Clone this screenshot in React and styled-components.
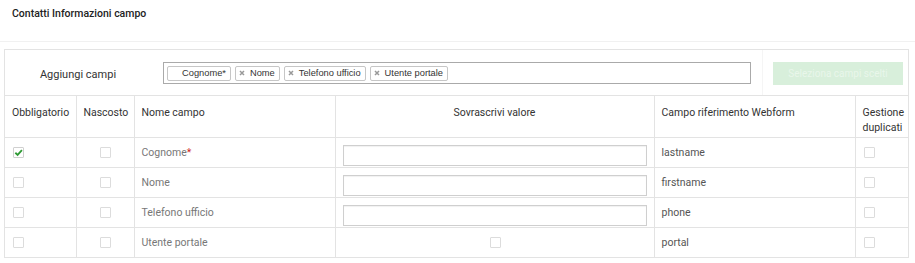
import React from "react";
import styled, { createGlobalStyle } from "styled-components";

const GlobalStyle = createGlobalStyle`
  html, body {
    margin: 0;
    padding: 0;
    background: #fff;
  }
  body {
    font-family: Roboto, "Noto Sans", Arial, sans-serif;
    color: #333;
  }
`;

const tags = [
  { label: "Cognome*", locked: true },
  { label: "Nome" },
  { label: "Telefono ufficio" },
  { label: "Utente portale" },
];

const fields = [
  { label: "Cognome", required: true, mandatory: true, override: "input", webform: "lastname" },
  { label: "Nome", override: "input", webform: "firstname" },
  { label: "Telefono ufficio", override: "input", webform: "phone" },
  { label: "Utente portale", override: "checkbox", webform: "portal" },
];

const Checkbox = ({ checked }) => (
  <CheckBox $checked={checked}>
    {checked && (
      <svg width="10" height="9" viewBox="0 0 10 9">
        <path d="M1.5 4.8 L4 7.2 L8.8 1.8" fill="none" stroke="#2f9a35" strokeWidth="2" />
      </svg>
    )}
  </CheckBox>
);

const App = () => {
  return (
    <Page>
      <GlobalStyle />
      <TitleBar>
        <Title>Contatti Informazioni campo</Title>
      </TitleBar>
      <Panel>
        <AddRow>
          <AddLabel>Aggiungi campi</AddLabel>
          <AddField>
            <TagBox>
              {tags.map((t) => (
                <Tag key={t.label}>
                  <TagRemove $hidden={t.locked}>
                    <svg width="6" height="6" viewBox="0 0 6 6">
                      <path d="M1 1 L5 5 M5 1 L1 5" stroke="#999" strokeWidth="1.5" />
                    </svg>
                  </TagRemove>
                  {t.label}
                </Tag>
              ))}
            </TagBox>
          </AddField>
          <ButtonCell>
            <SyncButton>Seleziona campi scelti</SyncButton>
          </ButtonCell>
        </AddRow>
        <Table>
          <thead>
            <tr>
              <HeadCell $w={71}>Obbligatorio</HeadCell>
              <HeadCell $w={58}>Nascosto</HeadCell>
              <HeadCell $w={201}>Nome campo</HeadCell>
              <HeadCell $w={319} $align="center">Sovrascrivi valore</HeadCell>
              <HeadCell $w={201}>Campo riferimento Webform</HeadCell>
              <HeadCell>Gestione duplicati</HeadCell>
            </tr>
          </thead>
          <tbody>
            {fields.map((f) => (
              <tr key={f.webform}>
                <Cell><Checkbox checked={f.mandatory} /></Cell>
                <Cell $align="center"><Checkbox /></Cell>
                <Cell>
                  <FieldName>
                    {f.label}
                    {f.required && <Required>*</Required>}
                  </FieldName>
                </Cell>
                {f.override === "input" ? (
                  <InputCell><ValueInput /></InputCell>
                ) : (
                  <Cell $align="center"><Checkbox /></Cell>
                )}
                <Cell><WebformName>{f.webform}</WebformName></Cell>
                <Cell><Checkbox /></Cell>
              </tr>
            ))}
          </tbody>
        </Table>
      </Panel>
    </Page>
  );
};

export default App;

const Page = styled.div`
  width: 915px;
  height: 263px;
  background: #fff;
  overflow: hidden;
`;

const TitleBar = styled.div`
  height: 42px;
  box-sizing: border-box;
  padding: 8px 12px 0;
  border-bottom: 1px solid #f1f1f1;
  margin-bottom: 7px;
`;

const Title = styled.h4`
  margin: 0;
  font-size: 10.5px;
  line-height: 12px;
  font-weight: 500;
  color: #222;
`;

const Panel = styled.div`
  margin: 0 6px 0 4px;
  border: 1px solid #e3e3e3;
`;

const AddRow = styled.div`
  display: grid;
  grid-template-columns: 146px 1fr 146px;
  height: 45px;
  align-items: center;
  border-bottom: 1px solid #e3e3e3;
`;

const AddLabel = styled.div`
  text-align: center;
  font-size: 11px;
  color: #333;
  padding-top: 3px;
`;

const AddField = styled.div`
  padding: 0 11px 0 12px;
  align-self: stretch;
  display: flex;
  align-items: center;
  padding-top: 1px;
`;

const TagBox = styled.div`
  flex: 1;
  height: 22px;
  box-sizing: border-box;
  border: 1px solid #aaa;
  background: #fff;
  display: flex;
  align-items: center;
  gap: 4px;
  padding: 0 3px;
`;

const Tag = styled.span`
  display: inline-flex;
  align-items: center;
  height: 15px;
  box-sizing: border-box;
  padding: 0 4px 0 3px;
  border: 1px solid #c6c6c6;
  border-radius: 2px;
  background: #fff;
  font-family: "Liberation Sans", Arial, sans-serif;
  font-size: 9.3px;
  color: #333;
`;

const TagRemove = styled.span`
  display: inline-flex;
  width: 6px;
  margin-right: 5px;
  visibility: ${(props) => (props.$hidden ? "hidden" : "visible")};
`;

const ButtonCell = styled.div`
  align-self: stretch;
  display: flex;
  align-items: center;
  border-left: 1px solid #f5f5f5;
  padding: 1px 5px 0 10px;
`;

const SyncButton = styled.button`
  width: 130px;
  height: 23px;
  border: none;
  border-radius: 0;
  background: #d8efdb;
  color: rgba(255, 255, 255, 0.45);
  font-family: Roboto, sans-serif;
  font-size: 10px;
  padding: 0;
`;

const Table = styled.table`
  width: 100%;
  table-layout: fixed;
  border-collapse: collapse;
  border-style: hidden;
  font-size: 10.5px;
`;

const HeadCell = styled.th`
  width: ${(props) => (props.$w ? `${props.$w}px` : "auto")};
  height: 41px;
  box-sizing: border-box;
  padding: 9px 7px 0 7px;
  vertical-align: top;
  text-align: ${(props) => props.$align || "left"};
  font-weight: 400;
  line-height: 15px;
  color: #333;
  border: 1px solid #e3e3e3;
`;

const Cell = styled.td`
  height: 30px;
  box-sizing: border-box;
  padding: 0 7px;
  vertical-align: middle;
  text-align: ${(props) => props.$align || "left"};
  line-height: 15px;
  border: 1px solid #e3e3e3;
`;

const InputCell = styled(Cell)`
  padding: 7px 7px 1px;
  vertical-align: top;
`;

const ValueInput = styled.input`
  display: block;
  width: 100%;
  height: 21px;
  box-sizing: border-box;
  border: 1px solid #cfcfcf;
  box-shadow: inset 0 1px 1px rgba(0, 0, 0, 0.06);
  background: #fff;
  margin: 0;
  outline: none;
`;

const CheckBox = styled.span`
  display: inline-flex;
  align-items: center;
  justify-content: center;
  width: 11px;
  height: 11px;
  box-sizing: border-box;
  border: 1px solid ${(props) => (props.$checked ? "#d0d0d0" : "#dcdcdc")};
  border-radius: 1px;
  background: #fff;
  vertical-align: middle;
  margin-left: 1px;
`;

const FieldName = styled.span`
  color: #777;
`;

const Required = styled.span`
  color: #d0281e;
`;

const WebformName = styled.span`
  color: #555;
`;
